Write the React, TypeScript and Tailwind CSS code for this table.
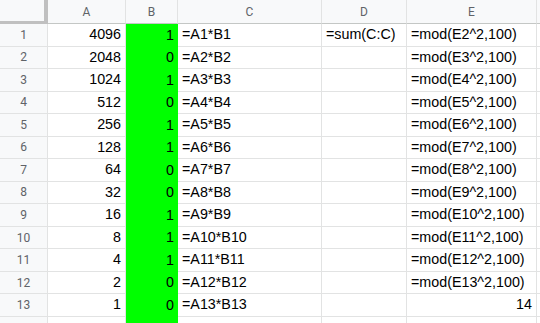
import React from "react";

// Sheet contents: column A powers of two, B the bit mask, C/D/E formulas
const rows = [
  { a: "4096", b: "1", c: "=A1*B1", d: "=sum(C:C)", e: "=mod(E2^2,100)" },
  { a: "2048", b: "0", c: "=A2*B2", d: "", e: "=mod(E3^2,100)" },
  { a: "1024", b: "1", c: "=A3*B3", d: "", e: "=mod(E4^2,100)" },
  { a: "512", b: "0", c: "=A4*B4", d: "", e: "=mod(E5^2,100)" },
  { a: "256", b: "1", c: "=A5*B5", d: "", e: "=mod(E6^2,100)" },
  { a: "128", b: "1", c: "=A6*B6", d: "", e: "=mod(E7^2,100)" },
  { a: "64", b: "0", c: "=A7*B7", d: "", e: "=mod(E8^2,100)" },
  { a: "32", b: "0", c: "=A8*B8", d: "", e: "=mod(E9^2,100)" },
  { a: "16", b: "1", c: "=A9*B9", d: "", e: "=mod(E10^2,100)" },
  { a: "8", b: "1", c: "=A10*B10", d: "", e: "=mod(E11^2,100)" },
  { a: "4", b: "1", c: "=A11*B11", d: "", e: "=mod(E12^2,100)" },
  { a: "2", b: "0", c: "=A12*B12", d: "", e: "=mod(E13^2,100)" },
  { a: "1", b: "0", c: "=A13*B13", d: "", e: "14" },
];

const cols = ["A", "B", "C", "D", "E", ""];

const cell =
  "border-r border-b border-[#e2e3e3] px-[4px] flex items-center whitespace-nowrap overflow-hidden";

export default function App() {
  return (
    <div className="w-[540px] h-[323px] overflow-hidden bg-white font-['Liberation_Sans',Arial,sans-serif] text-[14.3px] text-black">
      <div className="grid grid-cols-[48px_78px_52px_144px_85px_130px_1fr] grid-rows-[24px_repeat(13,22.54px)_22.54px]">
        {/* corner + column letters */}
        <div className="bg-[#f8f9fa] border-r-4 border-b-[3px] border-[#c0c0c0]" />
        {cols.map((c, i) => (
          <div
            key={i}
            className="bg-[#f8f9fa] border-r border-b border-r-[#e2e3e3] border-b-[#c4c7c5] flex items-center justify-center font-['Roboto',sans-serif] text-[12px] text-[#5f6368]"
          >
            {c}
          </div>
        ))}

        {rows.map((r, i) => (
          <React.Fragment key={i}>
            <div className="bg-[#f8f9fa] border-r border-b border-[#e2e3e3] flex items-center justify-center font-['Roboto',sans-serif] text-[12px] text-[#5f6368]">
              {i + 1}
            </div>
            <div className={`${cell} justify-end`}>{r.a}</div>
            <div className="bg-[#00ff00] px-[4px] flex items-center justify-end">{r.b}</div>
            <div className={cell}>{r.c}</div>
            <div className={cell}>{r.d}</div>
            <div className={`${cell} ${i === 12 ? "justify-end" : ""}`}>{r.e}</div>
            <div className={cell} />
          </React.Fragment>
        ))}

        {/* partly visible row 14 below the fold */}
        <div className="bg-[#f8f9fa] border-r border-[#e2e3e3]" />
        <div className="border-r border-[#e2e3e3]" />
        <div className="bg-[#00ff00]" />
        <div className="border-r border-[#e2e3e3]" />
        <div className="border-r border-[#e2e3e3]" />
        <div className="border-r border-[#e2e3e3]" />
        <div />
      </div>
    </div>
  );
}
